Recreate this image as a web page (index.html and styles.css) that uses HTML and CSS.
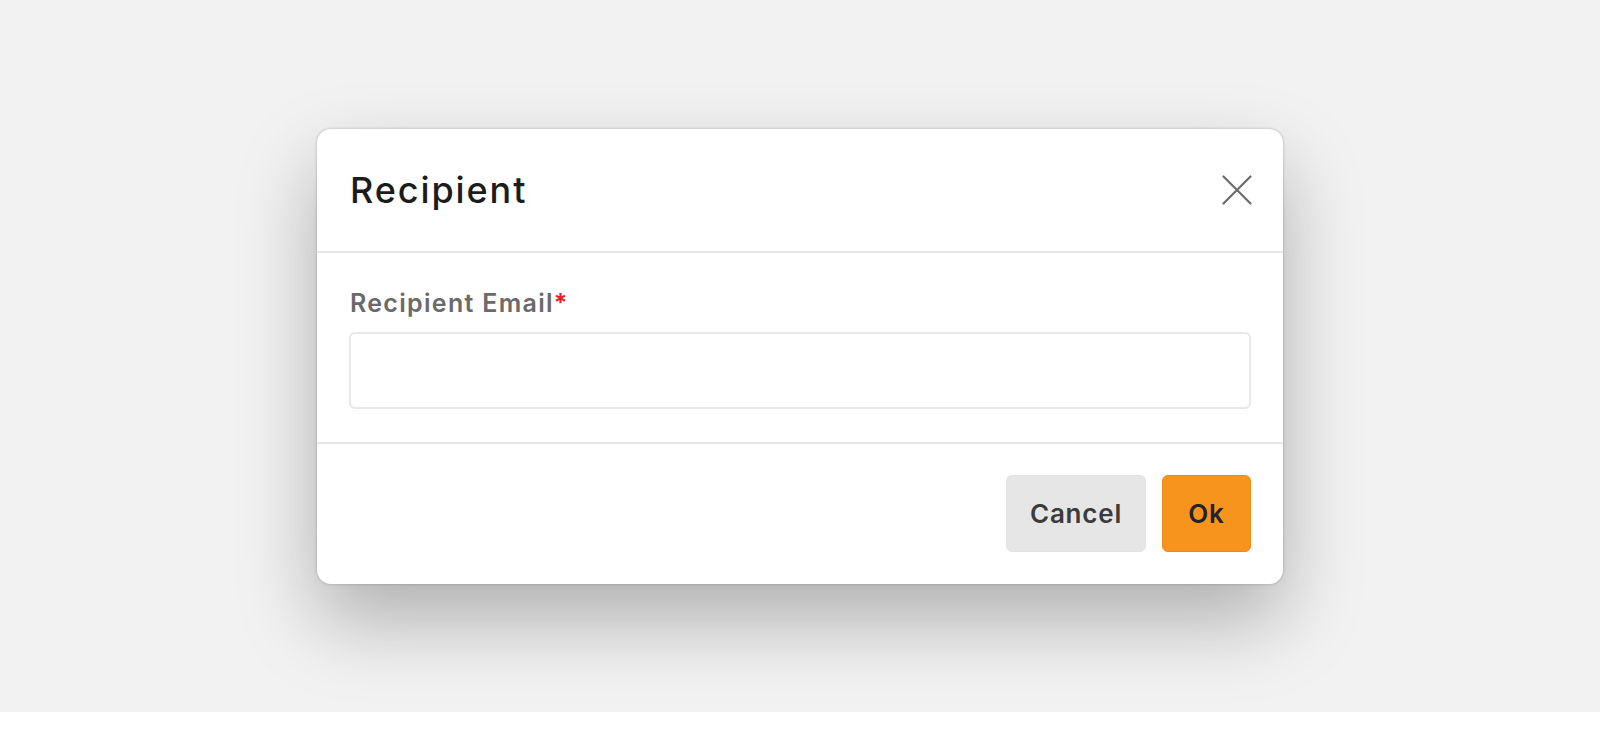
FILE: index.html
```html
<!DOCTYPE html>
<html>
<head>
<meta charset="utf-8">
<link rel="stylesheet" href="styles.css">
</head>
<body>
<div class="backdrop">
  <div class="dialog">
    <div class="dialog-header">
      <h2 class="dialog-title">Recipient</h2>
      <button class="close-btn" aria-label="Close">
        <svg width="30" height="30" viewBox="0 0 30 30"><path d="M1.5 1.5 L28.5 28.5 M28.5 1.5 L1.5 28.5" stroke="#6b6b6b" stroke-width="2.2" stroke-linecap="round" fill="none"/></svg>
      </button>
    </div>
    <div class="dialog-body">
      <label class="field-label">Recipient Email<span class="req">*</span></label>
      <input class="field-input" type="text">
    </div>
    <div class="dialog-footer">
      <button class="btn btn-cancel">Cancel</button>
      <button class="btn btn-ok">Ok</button>
    </div>
  </div>
</div>
</body>
</html>
```

FILE: styles.css
```css
html, body {
  margin: 0;
  padding: 0;
  background: #ffffff;
  font-family: Inter, "Noto Sans", sans-serif;
}
.backdrop {
  height: 712px;
  background: #f2f2f2;
  display: flex;
  align-items: center;
  justify-content: center;
}
.dialog {
  width: 966px;
  height: 455px;
  box-sizing: border-box;
  background: #fff;
  border-radius: 14px;
  box-shadow: 0 0 3px rgba(0,0,0,0.25), 0 36px 80px rgba(0,0,0,0.28);
  display: flex;
  flex-direction: column;
}
.dialog-header {
  height: 124px;
  box-sizing: border-box;
  border-bottom: 2px solid #e6e6e6;
  display: flex;
  align-items: center;
  justify-content: space-between;
  padding: 0 31px 0 33px;
}
.dialog-title {
  margin: 0;
  font-size: 36px;
  font-weight: 500;
  color: #1c1c1c;
  letter-spacing: 1.9px;
}
.close-btn {
  background: none;
  border: none;
  padding: 0;
  width: 30px;
  height: 30px;
  display: flex;
}
.dialog-body {
  flex: 1;
  padding: 35px 32px 0 32px;
  display: flex;
  flex-direction: column;
  border-bottom: 2px solid #e6e6e6;
}
.field-label {
  font-size: 25px;
  font-weight: 600;
  color: #6a6a6a;
  line-height: 30px;
  margin-bottom: 14px;
  padding-left: 1px;
  letter-spacing: 1.3px;
}
.req {
  color: #e02020;
}
.field-input {
  height: 77px;
  box-sizing: border-box;
  border: 2px solid #e8e8e8;
  border-radius: 6px;
  background: #fff;
  outline: none;
}
.dialog-footer {
  height: 140px;
  box-sizing: border-box;
  padding: 0 32px;
  display: flex;
  align-items: center;
  justify-content: flex-end;
  gap: 16px;
}
.btn {
  height: 77px;
  border-radius: 6px;
  font-family: Inter, "Noto Sans", sans-serif;
  font-size: 26px;
  font-weight: 600;
  letter-spacing: 0.8px;
  cursor: pointer;
}
.btn-cancel {
  width: 140px;
  background: #e6e6e6;
  border: 1px solid #e2e2e2;
  color: #3b3b3b;
}
.btn-ok {
  width: 89px;
  background: #f7941d;
  border: 1px solid #ef8a12;
  color: #1e2430;
}
```
